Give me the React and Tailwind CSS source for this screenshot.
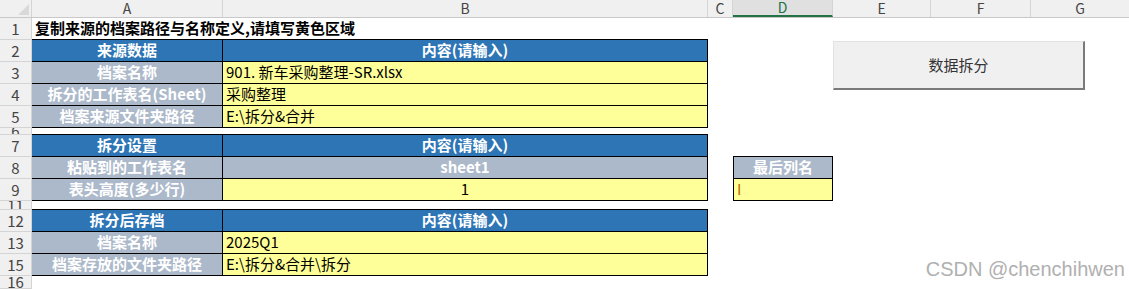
import React from "react";

const font = "font-['Noto_Sans_CJK_SC',sans-serif]";

// column header cells after the corner: A to F, G takes the rest
const colHead = [
  { key: "A", w: "w-[191px]" },
  { key: "B", w: "w-[485px]" },
  { key: "C", w: "w-[25px]" },
  { key: "D", w: "w-[100px]", sel: true },
  { key: "E", w: "w-[98px]" },
  { key: "F", w: "w-[100px]" },
];

const rows = [
  { n: 1, kind: "title", text: "复制来源的档案路径与名称定义,请填写黄色区域" },
  { n: 2, kind: "head", a: "来源数据", b: "内容(请输入)" },
  { n: 3, kind: "input", a: "档案名称", b: "901. 新车采购整理-SR.xlsx" },
  { n: 4, kind: "input", a: "拆分的工作表名(Sheet)", b: "采购整理" },
  { n: 5, kind: "input", a: "档案来源文件夹路径", b: "E:\\拆分&合并" },
  { n: 6, kind: "spacer", h: "h-[7px]" },
  { n: 7, kind: "head", a: "拆分设置", b: "内容(请输入)", dTop: true },
  { n: 8, kind: "label", a: "粘贴到的工作表名", b: "sheet1", d: { t: "最后列名", label: true } },
  { n: 9, kind: "center", a: "表头高度(多少行)", b: "1", d: { t: "I" } },
  { n: 11, kind: "spacer", h: "h-[9px]" },
  { n: 12, kind: "head", a: "拆分后存档", b: "内容(请输入)" },
  { n: 13, kind: "input", a: "档案名称", b: "2025Q1" },
  { n: 15, kind: "input", a: "档案存放的文件夹路径", b: "E:\\拆分&合并\\拆分" },
  { n: 16, kind: "empty", h: "h-[13px]" },
];

const RowNum = ({ n, h }) => (
  <div
    className={`w-[32px] shrink-0 ${h} overflow-hidden flex items-center justify-center bg-[#f0f0f0] border-r border-b border-[#d4d4d4] text-[15px] leading-[22px] text-[#444]`}
  >
    {n}
  </div>
);

const Cell = ({ row }) => {
  const base = "h-full box-border flex items-center whitespace-nowrap";

  if (row.kind === "title") {
    return (
      <>
        <div className={`w-[191px] ${base} border-b border-black pl-[3px] overflow-visible`}>
          <span className="font-bold text-[15px] text-black relative z-10">{row.text}</span>
        </div>
        <div className={`w-[485px] ${base} border-b border-black`} />
      </>
    );
  }
  if (row.kind === "spacer") {
    return (
      <>
        <div className={`w-[191px] ${base} border-b border-black`} />
        <div className={`w-[485px] ${base} border-b border-black`} />
      </>
    );
  }
  if (row.kind === "empty") return null;

  const aBg = row.kind === "head" ? "bg-[#2e75b6]" : "bg-[#acb9ca]";
  let bCls = "bg-[#ffff99] text-black pl-[3px]";
  if (row.kind === "head") bCls = "bg-[#2e75b6] text-white font-bold justify-center";
  if (row.kind === "label") bCls = "bg-[#acb9ca] text-white font-bold justify-center";
  if (row.kind === "center") bCls = "bg-[#ffff99] text-black justify-center";

  return (
    <>
      <div
        className={`w-[191px] ${base} ${aBg} justify-center border-r border-b border-black text-white font-bold text-[15px]`}
      >
        {row.a}
      </div>
      <div className={`w-[485px] ${base} ${bCls} border-r border-b border-black text-[15px]`}>
        {row.b}
      </div>
    </>
  );
};

const DCell = ({ row }) => {
  if (row.d) {
    return (
      <div
        className={`w-[100px] h-full box-border flex items-center border-l border-r border-b border-black text-[15px] ${
          row.d.label
            ? "bg-[#acb9ca] text-white font-bold justify-center"
            : "bg-[#ffff99] text-[#b86a00] pl-[3px]"
        }`}
      >
        {row.d.t}
      </div>
    );
  }
  return <div className={`w-[100px] h-full ${row.dTop ? "border-b border-black" : ""}`} />;
};

export default function App() {
  return (
    <div className={`${font} relative w-[1129px] h-[289px] bg-white overflow-hidden`}>
      {/* column headers */}
      <div className="flex h-[18px] bg-[#f0f0f0] border-b border-[#c8c8c8]">
        <div className="w-[32px] shrink-0 relative border-r border-[#d4d4d4]">
          <div className="absolute right-[2px] bottom-[2px] w-0 h-0 border-l-[11px] border-l-transparent border-b-[11px] border-b-[#d9d9d9]" />
        </div>
        {colHead.map((c) => (
          <div
            key={c.key}
            className={`${c.w} shrink-0 box-border flex items-center justify-center text-[14px] leading-[17px] border-r border-[#d4d4d4] ${
              c.sel ? "bg-[#e0e0e0] text-[#217346] border-b-2 border-b-[#217346]" : "text-[#444]"
            }`}
          >
            {c.key}
          </div>
        ))}
        <div className="flex-1 flex items-center justify-center text-[14px] leading-[17px] text-[#444]">G</div>
      </div>

      {/* rows */}
      {rows.map((row) => {
        const h = row.h || "h-[22px]";
        return (
          <div key={row.n} className={`flex ${h}`}>
            <RowNum n={row.n} h={h} />
            <Cell row={row} />
            {row.kind !== "empty" && (
              <>
                <div className="w-[25px] h-full" />
                <DCell row={row} />
              </>
            )}
          </div>
        );
      })}

      {/* form button */}
      <button className="absolute left-[833px] top-[41px] w-[252px] h-[49px] bg-[#f0f0f0] border-t border-l border-[#e2e2e2] border-r-2 border-b-2 border-r-[#7a7a7a] border-b-[#7a7a7a] text-[15px] text-[#333] flex items-center justify-center">
        数据拆分
      </button>

      {/* watermark */}
      <div className="absolute right-[4px] top-[256px] text-[20px] text-[#b0b0b0] font-['Liberation_Sans',sans-serif] leading-[26px]">
        CSDN @chenchihwen
      </div>
    </div>
  );
}
